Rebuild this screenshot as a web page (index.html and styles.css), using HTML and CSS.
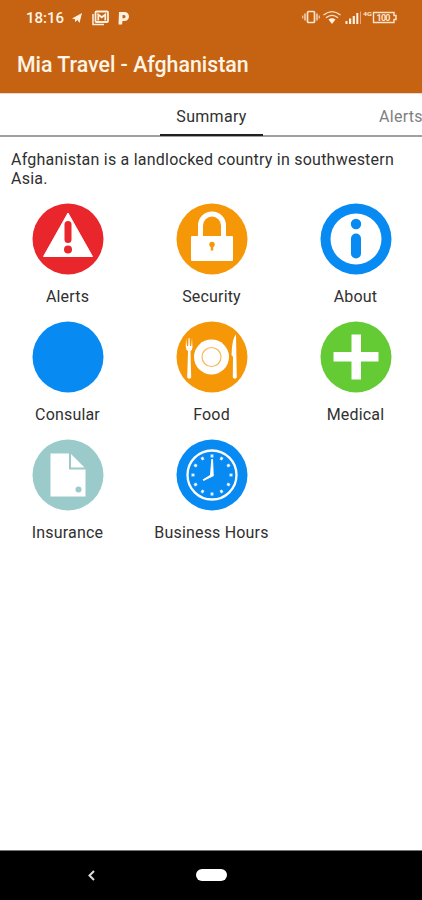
FILE: index.html
```
<!DOCTYPE html>
<html lang="en">
<head>
<meta charset="utf-8">
<meta name="viewport" content="width=device-width, initial-scale=1">
<title>Mia Travel - Afghanistan</title>
<link rel="stylesheet" href="styles.css">
</head>
<body>
<header class="header">
  <div class="statusbar">
    <span class="time">18:16</span>
    <svg class="notices" width="62" height="20" viewBox="0 0 62 20" fill="#fff0df">
      <path d="M1 11.500L11 6L8.500 16L6.500 13L4 15V12.200Z"/>
      <path d="M22 7V17.500H33" fill="none" stroke="#fff0df" stroke-width="1.500"/>
      <rect x="24.500" y="4.500" width="12.500" height="10.500" rx="1" fill="none" stroke="#fff0df" stroke-width="1.800"/>
      <path d="M27.300 13.500V7.500L30.800 10.300L34.300 7.500V13.500" fill="none" stroke="#fff0df" stroke-width="1.800"/>
      <path fill-rule="evenodd" d="M48 5H53.500A4.500 4.500 0 0 1 53.500 14H51.500L51 17.500H47.500ZM51.500 8V11.200H53A1.600 1.600 0 0 0 53 8Z"/>
    </svg>
    <svg class="signals" width="98" height="20" viewBox="0 0 98 20">
      <g fill="none" stroke="#ffe3cc">
        <rect x="5.500" y="4.500" width="7" height="11" rx="1" stroke-width="1.700"/>
        <path d="M3 6.500V13.500M15 6.500V13.500" stroke-width="1.300"/>
        <path d="M.8 8.500V11.500M17.200 8.500V11.500"/>
        <path d="M21.500 8Q30 1.300 38.500 8M24 10.800Q30 6 36 10.800" stroke-width="1.400"/>
      </g>
      <path d="M26.500 12.500Q30 10 33.500 12.500L30 17Z" fill="#fff0df"/>
      <path d="M43.500 14h2v3h-2zM47 11.500h2.200V17H47zM50.700 9h2.200v8h-2.200zM54.300 6h2v11h-2z" fill="#fff0df"/>
      <path d="M58.500 4.500V17" stroke="#eda779" stroke-width="1"/>
      <text class="network" x="61" y="8.500" textLength="9" lengthAdjust="spacingAndGlyphs">4G</text>
      <path d="M71.500 5.500H92V8.500H94V12.500H92V15.500H71.500Z" fill="none" stroke="#ffe3cc" stroke-width="1.400"/>
      <text class="charge" x="74.500" y="14" textLength="14">100</text>
    </svg>
  </div>
  <h1 class="title">Mia Travel - Afghanistan</h1>
</header>

<nav class="tabs">
  <a class="tab active">Summary</a>
  <a class="tab next">Alerts</a>
</nav>

<main class="content">
  <p class="intro">Afghanistan is a landlocked country in southwestern Asia.</p>
  <div class="grid">
    <a class="item">
      <svg class="icon" viewBox="0 0 72 72">
        <circle cx="36" cy="36" r="35.500" fill="#e8262c"/>
        <path d="M36 10L60.500 53.500H11.500Z" fill="#fff" stroke="#fff" stroke-linejoin="round"/>
        <path d="M36 21.500V36.500" stroke="#e8262c" stroke-width="7" stroke-linecap="round"/>
        <circle cx="36" cy="46.500" r="4" fill="#e8262c"/>
      </svg>
      <span class="label">Alerts</span>
    </a>
    <a class="item">
      <svg class="icon" viewBox="0 0 72 72">
        <circle cx="36" cy="36" r="35.500" fill="#f59707"/>
        <path d="M24.500 34V22.500A11.500 11.500 0 0 1 47.500 22.500V34" fill="none" stroke="#fff" stroke-width="5"/>
        <rect x="15" y="33" width="42" height="25" rx="1" fill="#fff"/>
        <circle cx="36" cy="41.500" r="2.700" fill="#f59707"/>
        <path d="M36 42V47.500" stroke="#f59707" stroke-width="2.500"/>
      </svg>
      <span class="label">Security</span>
    </a>
    <a class="item">
      <svg class="icon" viewBox="0 0 72 72">
        <circle cx="36" cy="36" r="35.500" fill="#088af3"/>
        <circle cx="36" cy="36" r="25.500" fill="#fff"/>
        <circle cx="36" cy="21" r="5.200" fill="#088af3"/>
        <path d="M36 35.500V50.500" stroke="#088af3" stroke-width="10" stroke-linecap="round"/>
      </svg>
      <span class="label">About</span>
    </a>
    <a class="item">
      <svg class="icon" viewBox="0 0 72 72">
        <circle cx="36" cy="36" r="35.500" fill="#088af3"/>
      </svg>
      <span class="label">Consular</span>
    </a>
    <a class="item">
      <svg class="icon" viewBox="0 0 72 72">
        <circle cx="36" cy="36" r="35.500" fill="#f59707"/>
        <circle cx="35.500" cy="36" r="17.500" fill="#fff"/>
        <circle cx="35.500" cy="36" r="9.500" fill="none" stroke="#f8b858" stroke-width="1.200"/>
        <path d="M10 17L11 25H12.200L12.600 17H13.600L14 25H15.200L16 17L16.500 26Q16.500 29 14.500 30L15.200 56.500Q13.200 59 11.200 56.500L12 30Q10 29 9.800 26Z" fill="#fff"/>
        <path d="M60 13.500Q56 17 55.500 34L57 36L56.800 56.500Q58.800 59 60.800 56.500Z" fill="#fff"/>
      </svg>
      <span class="label">Food</span>
    </a>
    <a class="item">
      <svg class="icon" viewBox="0 0 72 72">
        <circle cx="36" cy="36" r="35.500" fill="#64cb34"/>
        <path d="M31.500 13.500H41V31H58.500V40.500H41V58.500H31.500V40.500H13.500V31H31.500Z" fill="#fff"/>
      </svg>
      <span class="label">Medical</span>
    </a>
    <a class="item">
      <svg class="icon" viewBox="0 0 72 72">
        <circle cx="36" cy="36" r="35.500" fill="#9acaca"/>
        <path d="M18.500 14.500H37V30.500H53.500V57.500H18.500Z" fill="#fff"/>
        <path d="M39 15V28.500H52.500Z" fill="#fff"/>
        <circle cx="46.500" cy="50.500" r="3" fill="#9acaca"/>
      </svg>
      <span class="label">Insurance</span>
    </a>
    <a class="item">
      <svg class="icon" viewBox="0 0 72 72">
        <circle cx="36" cy="36" r="35.500" fill="#088af3"/>
        <circle cx="36" cy="36" r="24.500" fill="none" stroke="#fff" stroke-width="2.300"/>
        <!-- hour marks -->
        <g fill="#e4f3ff">
          <path id="mark" d="M34.600 15.500h2.800v3h-2.800z"/>
          <use href="#mark" transform="rotate(30 36 36)"/>
          <use href="#mark" transform="rotate(60 36 36)"/>
          <use href="#mark" transform="rotate(90 36 36)"/>
          <use href="#mark" transform="rotate(120 36 36)"/>
          <use href="#mark" transform="rotate(150 36 36)"/>
          <use href="#mark" transform="rotate(180 36 36)"/>
          <use href="#mark" transform="rotate(210 36 36)"/>
          <use href="#mark" transform="rotate(240 36 36)"/>
          <use href="#mark" transform="rotate(270 36 36)"/>
          <use href="#mark" transform="rotate(300 36 36)"/>
          <use href="#mark" transform="rotate(330 36 36)"/>
        </g>
        <path d="M35.300 20H37L37.800 37L27.500 42L26.700 40.600L34 36Z" fill="#fff"/>
      </svg>
      <span class="label">Business Hours</span>
    </a>
  </div>
</main>

<footer class="navbar">
  <svg class="back" width="10" height="14" viewBox="0 0 10 14">
    <path d="M7 2L2.500 6.500L7 11" fill="none" stroke="#ddd" stroke-width="2"/>
  </svg>
  <span class="home"></span>
</footer>
</body>
</html>
```
FILE: styles.css
```
* {
    box-sizing: border-box;
}
body {
    margin: 0;
    height: 900px;
    display: flex;
    flex-direction: column;
    overflow: hidden;
    background: #fff;
    color: #303030;
    font-family: Roboto, "Liberation Sans", sans-serif;
    font-size: 16px;
}
.header {
    height: 93px;
    flex: none;
    background: #c56312;
    color: #fff4e6;
}
.statusbar {
    display: flex;
    align-items: center;
    height: 35px;
    padding: 0 22px 0 26px;
}
.time {
    width: 45px;
    font-size: 15px;
    font-weight: 500;
}
.notices,
.signals {
    flex: none;
    margin-top: -1px;
}
.signals {
    margin-left: auto;
}
.network {
    fill: #ffe3cc;
    font-size: 6px;
    font-weight: 700;
}
.charge {
    fill: #ffe3cc;
    font-size: 9px;
    font-weight: 700;
}
.title {
    margin: 0;
    padding: 17px 17px 0;
    font-size: 21.3px;
    line-height: 26px;
    font-weight: 500;
}
.tabs {
    display: flex;
    flex: none;
    height: 44px;
    border-top: 1px solid #e8d9d0;
    padding-left: 160px;
    box-shadow: inset 0 -2px #a0a0a0;
    overflow: hidden;
}
.tab {
    flex: none;
    line-height: 45px;
    height: 42px;
    letter-spacing: .3px;
}
.active {
    width: 103px;
    text-align: center;
    border-bottom: 2px solid #202020;
}
.next {
    margin-left: 116px;
    color: #808080;
}
.content {
    flex: 1;
}
.intro {
    margin: 0;
    padding: 13px 11px 0;
    line-height: 19px;
    letter-spacing: .23px;
}
.grid {
    display: grid;
    grid-template-columns: repeat(3, 144px);
    grid-auto-rows: 118px;
    justify-content: center;
    width: 432px;
    margin: 15px 0 0 -4.5px;
}
.item {
    display: flex;
    flex-direction: column;
    align-items: center;
}
.icon {
    width: 72px;
    height: 72px;
    flex: none;
}
.label {
    margin-top: 12px;
    line-height: 20px;
    letter-spacing: .18px;
    white-space: nowrap;
}
.navbar {
    display: flex;
    align-items: center;
    flex: none;
    height: 50px;
    padding-left: 87px;
    border-top: 1px solid #777;
    background: #000;
}
.home {
    width: 31px;
    height: 12px;
    margin: -1px 0 0 99px;
    border-radius: 6px;
    background: #fff;
}
```
